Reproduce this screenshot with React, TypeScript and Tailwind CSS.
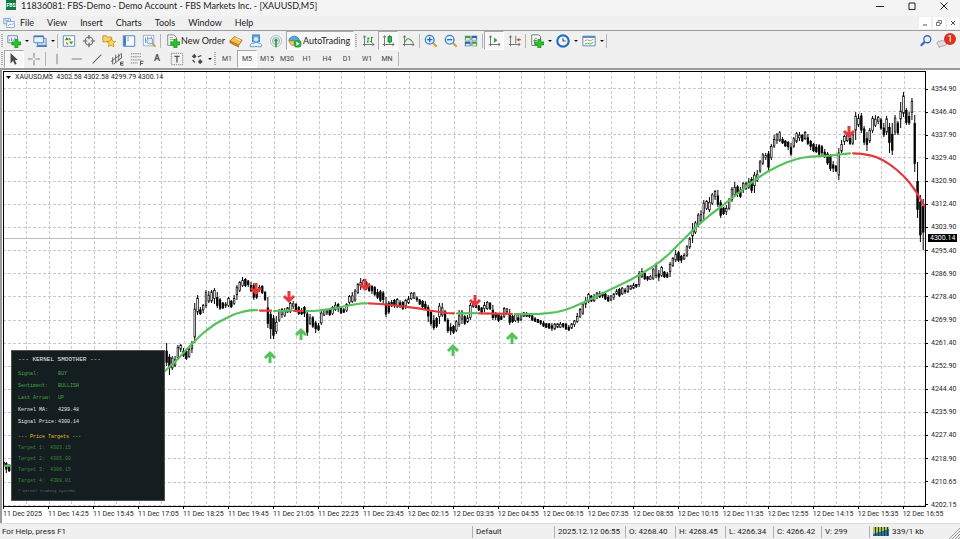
import type { ReactNode } from "react";

type Range = [high: number, low: number];

const FIRST_BAR_X = 3.5;
const BAR_STEP = 2.8125;

// Each block starts at a bar index and holds the high / low of every bar in it
const bars: { start: number; ranges: Range[] }[] = [
  { start: 0, ranges: [[460, 466], [462, 473], [464, 472], [466, 471]] },
  {
    start: 58,
    ranges: [
      [343, 366], [354, 375], [356, 370], [356, 367], [345, 360], [344, 352], [348, 357], [350, 360],
      [348, 358], [341, 353], [303, 343], [295, 315], [307, 315], [304, 313], [290, 308], [291, 303],
      [290, 303], [288, 304], [292, 308], [298, 310], [302, 309], [302, 308], [297, 307], [300, 308],
      [295, 305], [285, 300], [281, 292], [277, 287], [278, 287], [280, 287], [282, 292], [283, 300],
      [288, 299], [285, 292], [285, 294], [291, 301], [297, 328], [310, 339], [315, 339], [316, 334],
      [309, 322], [308, 318], [308, 317], [307, 313], [302, 313], [301, 309], [303, 312], [306, 315],
      [308, 315], [306, 317], [310, 336], [314, 325], [316, 328], [321, 333], [323, 331], [311, 325],
      [309, 316], [309, 315], [308, 316], [306, 315], [302, 311], [303, 312], [307, 314], [308, 313],
      [303, 312], [295, 306], [292, 303], [289, 302], [283, 294], [278, 290], [279, 288], [281, 290],
      [283, 292], [285, 294], [286, 296], [289, 299], [290, 302], [291, 304], [297, 317], [301, 314],
    ],
  },
  {
    start: 138,
    ranges: [
      [300, 307], [299, 308], [298, 308], [300, 308], [301, 310], [299, 309], [296, 304], [292, 300],
      [292, 299], [296, 302], [299, 305], [300, 308], [301, 310], [305, 322], [310, 326], [315, 330],
      [317, 328], [303, 324], [303, 317], [310, 322], [318, 333], [323, 335], [325, 334], [320, 332],
      [310, 327], [310, 324], [315, 325], [315, 323], [303, 320], [303, 308], [303, 308], [305, 311],
      [307, 313], [302, 312], [301, 310], [302, 310], [305, 320], [312, 320], [313, 322], [315, 320],
      [307, 318], [308, 314], [309, 325], [315, 323], [313, 322], [315, 323], [313, 321], [312, 317],
      [312, 317], [313, 318], [315, 321], [317, 322], [319, 323], [320, 325], [321, 327], [323, 328],
      [323, 329], [323, 331], [323, 330], [323, 328], [322, 328], [323, 328], [323, 330], [325, 331],
      [323, 329], [320, 327], [313, 323], [308, 318], [303, 315], [297, 308], [293, 303], [295, 302],
      [294, 302], [292, 299],
    ],
  },
  {
    start: 212,
    ranges: [
      [291, 298], [292, 298], [293, 300], [295, 302], [295, 301], [293, 300], [289, 295], [288, 297],
      [287, 295], [288, 294], [285, 293], [285, 290], [283, 289], [284, 288], [271, 287], [268, 278],
      [272, 280], [276, 281], [275, 280], [268, 280], [263, 278], [270, 281], [266, 277], [271, 278],
      [272, 278], [262, 277], [257, 267], [250, 262], [251, 262], [255, 263], [253, 260], [245, 257],
      [237, 249], [223, 243], [221, 234], [213, 227], [210, 223], [200, 220], [200, 210], [197, 212],
      [193, 205], [190, 200], [190, 207], [200, 218], [207, 215], [205, 215], [198, 210], [187, 202],
      [182, 197], [185, 197],
    ],
  },
  {
    start: 262,
    ranges: [
      [187, 198], [182, 193], [182, 190], [178, 189], [177, 193], [172, 193], [170, 182], [160, 173],
      [153, 165], [153, 160], [151, 170], [144, 160], [135, 148], [133, 144], [131, 142], [137, 144],
      [140, 147], [141, 150], [143, 156], [137, 148], [132, 143], [132, 141], [134, 142], [131, 140],
      [134, 145], [140, 150], [143, 152], [144, 153], [144, 156], [145, 157], [149, 158], [152, 165],
      [154, 171], [161, 172], [165, 172], [148, 180], [140, 153], [135, 145], [133, 142], [135, 145],
      [133, 145], [112, 140], [114, 127], [113, 133], [126, 145], [132, 151], [128, 143], [116, 133],
      [115, 127], [116, 124], [118, 130], [123, 137], [116, 135], [123, 153], [123, 155], [115, 135],
      [121, 135], [102, 128], [92, 117], [108, 125], [112, 125], [98, 120], [115, 172], [162, 218],
      [195, 242], [199, 250], [192, 238],
    ],
  },
];

const upColor = "#55c25c";
const downColor = "#e5383b";

const trendLines = [
  { color: upColor, points: "3,466 11,465.5" },
  { color: upColor, points: "165,371 173,363.5 180,356.7 187,349 195,341 201,335 207,330 216,323.5 227,317.7 235,314 243,311.7 250,310.3 257,310.2" },
  { color: downColor, points: "260,310.6 271,310.6" },
  { color: upColor, points: "274,311 283,310.8 292,310.4" },
  { color: downColor, points: "294,310.8 303,311" },
  { color: upColor, points: "306,311 313,311 320,310.3 330,309 340,307.3 349,305.3 357,304 362,303.4 367,303.3" },
  { color: downColor, points: "369,303.4 380,304 400,306 420,308.7 430,310.5 440,312 447,313 454,313.3" },
  { color: upColor, points: "457,313.4 477,313.2" },
  { color: downColor, points: "479,313.4 495,313.7 512,314" },
  { color: upColor, points: "515,314 530,314.2 540,313.8 548,313.2 557,312 565,310 573,307 587,301 600,294.5 620,285 631,279.5 642,273.3 651,267.8 660,261.7 669,254 678,245 686,237 693,230 701,222.7 710,215 722,206 733,197.3 745,187.5 757,178.5 767,172 777,166.7 787,162.3 797,159 804,157.5 811,156.6 830,155.6 840,154.3 850,153.3" },
  { color: downColor, points: "853,153.3 862,153.9 870,155.3 877,157.4 883,160.3 890,164.6 897,170 904,176.5 910,183.3 916,191.5 921,200 926,208.5" },
];

const sellArrows = [[256, 289], [289, 297], [365, 285], [475, 301], [849, 132]];
const buyArrows = [[270, 357], [301, 334], [453, 350], [512, 338]];

const prices = [
  "4354.90", "4346.40", "4337.90", "4329.40", "4320.90", "4312.40", "4303.90", "4295.40", "4286.90", "4278.40",
  "4269.90", "4261.40", "4252.90", "4244.40", "4235.90", "4227.40", "4218.90", "4210.65", "4202.15",
];

const times = [
  "11 Dec 2025", "11 Dec 14:25", "11 Dec 15:45", "11 Dec 17:05", "11 Dec 18:25", "11 Dec 19:45", "11 Dec 21:05",
  "11 Dec 22:25", "11 Dec 23:45", "12 Dec 02:15", "12 Dec 03:35", "12 Dec 04:55", "12 Dec 06:15", "12 Dec 07:35",
  "12 Dec 08:55", "12 Dec 10:15", "12 Dec 11:35", "12 Dec 12:55", "12 Dec 14:15", "12 Dec 15:35", "12 Dec 16:55",
];

const menus = ["File", "View", "Insert", "Charts", "Tools", "Window", "Help"];
const timeframes = ["M1", "M5", "M15", "M30", "H1", "H4", "D1", "W1", "MN"];

const signalRows = [
  { label: "Signal:", value: "BUY", color: "text-[#43a548]" },
  { label: "Sentiment:", value: "BULLISH", color: "text-[#43a548]" },
  { label: "Last Arrow:", value: "UP", color: "text-[#43a548]" },
  { label: "Kernel MA:", value: "4299.48", color: "text-[#e8e8e8]" },
  { label: "Signal Price:", value: "4300.14", color: "text-[#e8e8e8]" },
];

const targets = ["4303.15", "4305.00", "4306.15", "4308.01"];

const Icon = ({ children }: { children: ReactNode }) => (
  <svg viewBox="0 0 16 16" className="size-3.5 shrink-0" fill="none" aria-hidden="true">
    {children}
  </svg>
);

const Plus = () => (
  <path d="M9 6h3.500v3H16v3.500h-3.500V16H9v-3.500H5.500V9H9z" fill="#2bc52b" stroke="#0b7d12" strokeWidth=".7" />
);

const Axes = () => (
  <path d="M4 2v12M2 12h13M2.500 4 4 2l1.500 2M13 10.500 15 12l-2 1.500" stroke="#666" />
);

const icons = {
  app: (
    <>
      <path d="M1 2h9v7H1z" fill="#e3effc" stroke="#5d93d3" />
      <path d="M5 6h10v8H5z" fill="#fff" stroke="#5d93d3" />
      <path d="m7 12 2-3 2 2 3-3M2 4l3 1 3-1" stroke="#5d93d3" />
    </>
  ),
  newChart: (
    <>
      <path d="M1 2h11v8H1z" fill="#fff" stroke="#4f7fae" />
      <path d="M3 8V6m2 2V4m2 4V6m2 0V4" stroke="#4f7fae" />
      <Plus />
    </>
  ),
  profiles: (
    <>
      <path d="M5 5h10v8H5z" fill="#c9def5" stroke="#4d7db5" />
      <path d="M1 2h11v8H1z" fill="#eaf3fd" stroke="#4d7db5" />
      <path d="M1 3h11M4 14h12" stroke="#4d7db5" strokeWidth="1.500" />
    </>
  ),
  marketWatch: (
    <>
      <path d="M1.500 2h13v12h-13z" fill="#fff" stroke="#4d86c6" />
      <path d="m3 7 2.500-3.500L8 7zM8 8.500l2.500 3.500L13 8.500z" fill="#27a334" />
      <path d="M7.500 4.500 10 7M4.500 9.500 7 12" stroke="#d9762b" strokeWidth="1.800" />
    </>
  ),
  dataWindow: (
    <>
      <circle cx="8" cy="8" r="4.500" stroke="#666" strokeWidth="1.200" />
      <path d="M8 1v5M8 10v5M1 8h5M10 8h5" stroke="#666" strokeWidth="1.400" />
    </>
  ),
  navigator: (
    <>
      <path d="M1 2h4l1 1.500h5V9H1z" fill="#f7d367" stroke="#c59528" />
      <path d="m10.500 5 1.500 3.200 3.500.4-2.600 2.300.8 3.600-3.200-1.800-3.200 1.800.8-3.600L5.500 8.600l3.500-.4z" fill="#ffd84a" stroke="#b98616" strokeWidth=".8" />
    </>
  ),
  terminal: (
    <>
      <path d="M1.500 2h13v12h-13z" fill="#f3f9ff" stroke="#3c79c4" />
      <path d="M2 2.500h2.500v11H2z" fill="#3c79c4" />
      <path d="M6 4.500h2M6 7h2" stroke="#b36a32" />
    </>
  ),
  tester: (
    <>
      <path d="M1.500 1.500h12v12h-12z" fill="#fff" stroke="#8aa9c9" />
      <path d="M4 4v6M6.500 3v5M11 3v5" stroke="#5f8ec0" />
      <circle cx="9" cy="8" r="3.500" fill="#d9ecff" stroke="#6c93bd" />
      <path d="m11.500 10.500 4 4" stroke="#c69b3e" strokeWidth="2" />
    </>
  ),
  newOrder: (
    <>
      <path d="M2 1h7l3 3v9H2z" fill="#fff" stroke="#6a7f6a" />
      <path d="M4 4h4M4 6.500h6M4 9h3" stroke="#8b9b8b" />
      <Plus />
    </>
  ),
  metaEditor: (
    <>
      <path d="m1 8 5-5 9 4-4 6z" fill="#f2bd4b" stroke="#a86f12" />
      <path d="m1 8 10 5v2L1 10z" fill="#c88a20" stroke="#a86f12" strokeWidth=".7" />
      <path d="m7 4.500 6 2.700" stroke="#ffe6a3" strokeWidth="1.500" />
    </>
  ),
  account: (
    <>
      <path d="M4 1h8v8H4z" fill="#5ba5e0" stroke="#3f80b8" />
      <circle cx="8" cy="6" r="2.500" fill="#d8ecfa" />
      <path d="M1.500 14.500c-1-3 2-4.500 4-3.500 1-2 5-2 6 0 2-1 4 1.500 2.500 3.500z" fill="#eaf4fc" stroke="#5d8fc0" />
    </>
  ),
  signals: (
    <>
      <circle cx="8" cy="8" r="6.500" stroke="#a7bfc9" />
      <circle cx="8" cy="8" r="4" stroke="#7ba1a1" />
      <circle cx="8" cy="7.500" r="2" fill="#2fa344" />
      <path d="M8 9v6" stroke="#2fa344" strokeWidth="2" />
    </>
  ),
  autoTrading: (
    <>
      <path d="M1 8a6 5.500 0 0 1 12 0z" fill="#5ba6dc" stroke="#2c74ab" strokeWidth=".8" />
      <path d="M1 8h13l-3 5H4z" fill="#f3cc4c" stroke="#b58b1a" strokeWidth=".8" />
      <circle cx="11" cy="11" r="4.500" fill="#28a745" />
      <path d="m9.500 8.500 4 2.500-4 2.500z" fill="#fff" />
    </>
  ),
  barChart: (
    <>
      <Axes />
      <path d="M8 4v6M6.500 9H8M8 5h1.500M12 3v7M10.500 8.500H12M12 4h1.500" stroke="#23993a" strokeWidth="1.200" />
    </>
  ),
  candles: (
    <>
      <Axes />
      <path d="M10 1v10" stroke="#0c7a22" />
      <path d="M8 3h4v6H8z" fill="#2fc244" stroke="#0c7a22" />
    </>
  ),
  lineChart: (
    <>
      <Axes />
      <path d="M4 10c3-6 5-6 10 0" stroke="#39a44a" strokeWidth="1.200" />
    </>
  ),
  tile: (
    <>
      <path d="M1 2h6.500v5.500H1zM8.500 8.500H15V14H8.500z" fill="#4c9b3d" />
      <path d="M8.500 2H15v5.500H8.500zM1 8.500h6.500V14H1z" fill="#2f62ad" />
      <path d="M2 4.500h4.500V7H2zM9.500 4.500H14V7H9.500zM2 11h4.500v2.500H2zM9.500 11H14v2.500H9.500z" fill="#d6e6f4" />
    </>
  ),
  autoScroll: (
    <>
      <Axes />
      <path d="m8 4 4 3-4 3z" fill="#2ca53c" />
    </>
  ),
  chartShift: (
    <>
      <Axes />
      <path d="M10 2v9" stroke="#666" />
      <path d="m11 6.500 3-2v4z" fill="#c53a2c" />
      <path d="M13 6.500h3" stroke="#c53a2c" />
    </>
  ),
  indicators: (
    <>
      <path d="M2 1h8l2 2v10H2z" fill="#fff" stroke="#56705a" />
      <path d="M5 11c0-6 1-7 3-6M4 7.500h4" stroke="#3f7a48" />
      <Plus />
    </>
  ),
  periods: (
    <>
      <circle cx="8" cy="8" r="6.500" fill="#f4faff" stroke="#2a6cbc" strokeWidth="2.500" />
      <path d="M8 4.500V8h3" stroke="#2a4d7d" strokeWidth="1.200" />
    </>
  ),
  templates: (
    <>
      <path d="M1 2.500h14v11H1z" fill="#fff" stroke="#4f7fb0" />
      <path d="M1 3.500h14" stroke="#4f86c4" strokeWidth="2" />
      <path d="m3 8 3-1.500 3 1.500 4-2" stroke="#c0832d" />
      <path d="m3 11.500 3-1 3 1 4-2" stroke="#3d9c4a" />
    </>
  ),
  cursor: <path d="m4 1 8.500 8H9l2 4.500-2 1L7 10l-3 3z" fill="#4a4a4a" />,
  crosshair: <path d="M8 1v5.500M8 9.500V15M1 8h5.500M9.500 8H15" stroke="#888" strokeWidth="1.300" />,
  vLine: <path d="M8 2v12" stroke="#888" strokeWidth="1.200" />,
  hLine: <path d="M2 8h12" stroke="#888" strokeWidth="1.200" />,
  trendLine: <path d="M3 13 13 3" stroke="#666" strokeWidth="1.300" />,
  channel: (
    <>
      <path d="M1 11 12 3M4 14l10-8M3 6v8M6.500 3v9M10 2v8M13 1v6" stroke="#555" />
      <path d="M15.500 11.500H12v3.500h3.500M12 13.200h3" stroke="#444" />
    </>
  ),
  fibo: (
    <>
      <path d="M1 2h12M1 5.500h12M1 9h12M1 12.500h8" stroke="#666" strokeDasharray="1.500 1" />
      <path d="M12 15.500v-5h3.500M12 13h3" stroke="#444" />
    </>
  ),
  textBox: (
    <>
      <path d="M1.500 1.500h13v13h-13z" stroke="#777" strokeDasharray="1.500 1" />
      <path d="M5 5h6M8 5v7" stroke="#555" strokeWidth="1.500" />
    </>
  ),
  arrows: (
    <>
      <path d="m2 5 3-3 2.500 3L5 7.500zM9 11l2.500-3 3 3-3 3z" fill="#4a4a4a" />
      <path d="m3 9 2.500 3M9 5.500l4-1.500" stroke="#4a4a4a" strokeWidth="1.500" />
    </>
  ),
  search: (
    <>
      <circle cx="9.500" cy="6" r="4" fill="#eaf2ff" stroke="#3c66c4" strokeWidth="1.500" />
      <path d="M6.500 9 2 13.500" stroke="#3c66c4" strokeWidth="2.500" />
    </>
  ),
};

const ZoomIcon = ({ plus = false }) => (
  <Icon>
    <path d="m10 10 4.500 4.500" stroke="#d1a336" strokeWidth="2.500" />
    <circle cx="6.500" cy="6.500" r="5" fill="#e3f1ff" stroke="#3a80cd" strokeWidth="1.500" />
    <path d={plus ? "M3.500 6.500h6M6.500 3.500v6" : "M3.500 6.500h6"} stroke="#2368b6" strokeWidth="1.500" />
  </Icon>
);

const Caret = () => (
  <svg viewBox="0 0 4 2" className="ml-1 h-[2px] w-1 shrink-0" aria-hidden="true">
    <path d="M0 0h4L2 2z" fill="#111" />
  </svg>
);

const Separator = () => <span className="mx-px h-3.5 w-px shrink-0 bg-[#b5b5b5]" />;

const Grip = () => (
  <span className="mx-px h-3.5 w-0.5 shrink-0 bg-[repeating-linear-gradient(#a8a8a8_0_1px,transparent_1px_2px)]" />
);

interface ToolProps {
  label: string;
  children: ReactNode;
  pressed?: boolean;
  menu?: boolean;
}

const Tool = ({ label, children, pressed, menu }: ToolProps) => (
  <button
    type="button"
    aria-label={label}
    className={`flex h-full shrink-0 items-center justify-center border ${menu ? "w-[26px] pl-px" : "w-5"} ${
      pressed ? "border-[#a9a9a9] border-r-white border-b-white bg-[#f8f8f8]" : "border-transparent"
    }`}
  >
    {children}
    {menu && <Caret />}
  </button>
);

const TitleBar = () => (
  <header className="flex h-4 shrink-0 items-start bg-[#f3f3f3] pl-1.5">
    <span className="mr-[5px] flex h-2.5 w-2.5 items-center justify-center bg-[#0c7a43] text-[5px] leading-none font-bold text-white">
      FBS
    </span>
    <h1 className="flex-1 font-[Lato,sans-serif] text-[9px] leading-3 whitespace-nowrap">
      11836081: FBS-Demo - Demo Account - FBS Markets Inc. - [XAUUSD,M5]
    </h1>
    <div className="flex h-[11px]">
      <button type="button" aria-label="Minimize" className="flex w-8 items-center justify-center">
        <svg viewBox="0 0 8 8" className="size-2" stroke="#222"><path d="M0 4.500h8" /></svg>
      </button>
      <button type="button" aria-label="Maximize" className="flex w-8 items-center justify-center">
        <svg viewBox="0 0 8 8" className="size-2" stroke="#222" fill="none"><path d="M1 1h6v6.500H1z" /></svg>
      </button>
      <button type="button" aria-label="Close" className="flex w-8 items-center justify-center">
        <svg viewBox="0 0 8 8" className="size-2" stroke="#222"><path d="m.500.500 7 7m0-7-7 7" /></svg>
      </button>
    </div>
  </header>
);

const MenuBar = () => (
  <nav className="flex h-[15px] shrink-0 items-center border-b border-[#9c9c9c] bg-[#f0f0f0] pl-[3px]">
    <svg viewBox="0 0 16 16" className="mr-[5px] size-3" fill="none" aria-hidden="true">{icons.app}</svg>
    <ul className="flex flex-1 gap-[13px] font-[Lato,sans-serif] text-[9px] leading-3">
      {menus.map((menu) => (
        <li key={menu}>
          <button type="button">{menu}</button>
        </li>
      ))}
    </ul>
    <div className="flex gap-0.5 pr-px">
      <button type="button" aria-label="Minimize chart" className="flex size-3 items-center justify-center bg-white">
        <svg viewBox="0 0 6 6" className="size-1.5" stroke="#555"><path d="M1 5h4" /></svg>
      </button>
      <button type="button" aria-label="Restore chart" className="flex size-3 items-center justify-center bg-white">
        <svg viewBox="0 0 6 6" className="size-1.5" stroke="#555" fill="none"><path d="M2 2V.500h3.500v3H4M.500 2.500H4v3H.500z" strokeWidth=".8" /></svg>
      </button>
      <button type="button" aria-label="Close chart" className="flex size-3 items-center justify-center bg-white">
        <svg viewBox="0 0 6 6" className="size-1.5" stroke="#555"><path d="m1 1 4 4m0-4L1 5" /></svg>
      </button>
    </div>
  </nav>
);

const MainToolbar = () => (
  <div className="flex h-[19px] shrink-0 items-center">
    <div className="flex h-full flex-1 items-center">
      <Grip />
      <Tool label="New chart" menu><Icon>{icons.newChart}</Icon></Tool>
      <Tool label="Profiles" menu><Icon>{icons.profiles}</Icon></Tool>
      <Separator />
      <Tool label="Market watch"><Icon>{icons.marketWatch}</Icon></Tool>
      <Tool label="Data window"><Icon>{icons.dataWindow}</Icon></Tool>
      <Tool label="Navigator"><Icon>{icons.navigator}</Icon></Tool>
      <Tool label="Terminal"><Icon>{icons.terminal}</Icon></Tool>
      <Tool label="Strategy tester"><Icon>{icons.tester}</Icon></Tool>
      <Separator />
      <button type="button" className="flex h-full w-[64px] shrink-0 items-center gap-px pl-1 font-[Lato,sans-serif] text-[9px] whitespace-nowrap">
        <Icon>{icons.newOrder}</Icon>
        New Order
      </button>
      <Tool label="MetaEditor"><Icon>{icons.metaEditor}</Icon></Tool>
      <Tool label="Account"><Icon>{icons.account}</Icon></Tool>
      <Tool label="Signals"><Icon>{icons.signals}</Icon></Tool>
      <button type="button" className="flex h-full w-[68px] shrink-0 items-center gap-px border border-[#a9a9a9] border-r-white border-b-white bg-[#f8f8f8] pl-px font-[Lato,sans-serif] text-[9px] whitespace-nowrap">
        <Icon>{icons.autoTrading}</Icon>
        AutoTrading
      </button>
      <Grip />
      <Tool label="Bar chart"><Icon>{icons.barChart}</Icon></Tool>
      <Tool label="Candlesticks" pressed><Icon>{icons.candles}</Icon></Tool>
      <Tool label="Line chart"><Icon>{icons.lineChart}</Icon></Tool>
      <Separator />
      <Tool label="Zoom in"><ZoomIcon plus /></Tool>
      <Tool label="Zoom out"><ZoomIcon /></Tool>
      <Tool label="Tile windows"><Icon>{icons.tile}</Icon></Tool>
      <Separator />
      <Tool label="Auto scroll" pressed><Icon>{icons.autoScroll}</Icon></Tool>
      <Tool label="Chart shift"><Icon>{icons.chartShift}</Icon></Tool>
      <Separator />
      <Tool label="Indicators" menu><Icon>{icons.indicators}</Icon></Tool>
      <Tool label="Periods" menu><Icon>{icons.periods}</Icon></Tool>
      <Tool label="Templates" menu><Icon>{icons.templates}</Icon></Tool>
      <Separator />
    </div>
    <Tool label="Search"><Icon>{icons.search}</Icon></Tool>
    <button type="button" aria-label="Notifications" className="relative mr-1 h-full w-5">
      <svg viewBox="0 0 12 10" className="mt-1 h-2.5 w-3" aria-hidden="true">
        <path d="M1 5c0-3 10-3 10 0 0 2-2 3-5 3L3 9.500V8C2 7.500 1 6.500 1 5z" fill="#ddd" stroke="#aaa" />
      </svg>
      <span className="absolute top-0.5 right-0 flex size-3 items-center justify-center rounded-full bg-[#dc3220] text-[9px] leading-none text-white">
        1
      </span>
    </button>
  </div>
);

const DrawingToolbar = () => (
  <div className="flex h-[18px] shrink-0 items-center">
    <Grip />
    <Tool label="Cursor" pressed><Icon>{icons.cursor}</Icon></Tool>
    <Tool label="Crosshair"><Icon>{icons.crosshair}</Icon></Tool>
    <Separator />
    <Tool label="Vertical line"><Icon>{icons.vLine}</Icon></Tool>
    <Tool label="Horizontal line"><Icon>{icons.hLine}</Icon></Tool>
    <Tool label="Trendline"><Icon>{icons.trendLine}</Icon></Tool>
    <Tool label="Equidistant channel"><Icon>{icons.channel}</Icon></Tool>
    <Tool label="Fibonacci retracement"><Icon>{icons.fibo}</Icon></Tool>
    <Tool label="Text"><span className="text-[9px] font-bold text-[#555]">A</span></Tool>
    <Tool label="Text label"><Icon>{icons.textBox}</Icon></Tool>
    <Tool label="Arrows" menu><Icon>{icons.arrows}</Icon></Tool>
    <Grip />
    {timeframes.map((frame) => (
      <Tool key={frame} label={frame} pressed={frame === "M5"}>
        <span className="text-[7px] text-[#444]">{frame}</span>
      </Tool>
    ))}
    <Separator />
  </div>
);

const Candles = () => (
  <g>
    {bars.flatMap(({ start, ranges }) =>
      ranges.map(([high, low], i) => {
        const x = FIRST_BAR_X + (start + i) * BAR_STEP;
        const prev = ranges[i - 1] ?? [high, low - 1];
        const rising = high + low < prev[0] + prev[1];
        const span = low - high;
        const top = high + span * (i % 3 === 0 ? 0.35 : 0.15);
        const bottom = low - span * (i % 4 === 1 ? 0.35 : 0.15);
        return (
          <g key={start + i}>
            <path d={`M${x} ${high}V${low}`} stroke="#000" />
            <rect
              x={x - 0.8}
              y={top}
              width={1.6}
              height={bottom - top}
              fill={rising ? "#fff" : "#000"}
              stroke="#000"
              strokeWidth={0.7}
            />
          </g>
        );
      }),
    )}
  </g>
);

const Plot = () => (
  <svg viewBox="4 72 921 434" preserveAspectRatio="none" className="absolute inset-0 size-full" aria-label="XAUUSD, M5">
    <g stroke="#cacaca" strokeDasharray="3 2">
      {Array.from({ length: 40 }, (_, i) => (
        <path key={i} d={`M${Math.round(26 + i * 22.5) + 0.5} 71V507`} />
      ))}
      {prices.map((price, i) => (
        <path key={price} d={`M3 ${Math.round(88 + i * 23.15) + 0.5}H926`} />
      ))}
    </g>
    <path d="M3 238.500H926" stroke="#bdbdbd" />
    <Candles />
    {trendLines.map(({ color, points }) => (
      <polyline key={points} points={points} fill="none" stroke={color} strokeWidth="2.200" strokeLinecap="round" strokeLinejoin="round" />
    ))}
    {sellArrows.map(([x, y]) => (
      <path key={x} d={`M${x} ${y - 6}v10M${x - 5} ${y - 1}l5 5 5-5`} fill="none" stroke={downColor} strokeWidth="3" />
    ))}
    {buyArrows.map(([x, y]) => (
      <path key={x} d={`M${x} ${y + 6}v-10M${x - 5} ${y + 1}l5-5 5 5`} fill="none" stroke={upColor} strokeWidth="3" />
    ))}
  </svg>
);

const SignalPanel = () => (
  <section className="absolute bottom-[5px] left-[7px] h-[151px] w-[154px] border border-[#5a4c58] bg-[#141d1f] px-1.5 pt-1 font-['Liberation_Mono',monospace] text-[5px] whitespace-pre">
    <h2 className="text-[6px] leading-[10px] text-[#e8e8e8]">--- KERNEL SMOOTHER ---</h2>
    <dl className="mt-1">
      {signalRows.map(({ label, value, color }) => (
        <div key={label} className={`flex h-3 items-center ${color}`}>
          <dt className="w-10">{label}</dt>
          <dd>{value}</dd>
        </div>
      ))}
    </dl>
    <h3 className="mt-0.5 leading-3 text-[#e0c02a]">--- Price Targets ---</h3>
    <dl>
      {targets.map((target, i) => (
        <div key={target} className="flex h-[11px] items-center text-[#39853e]">
          <dt className="w-8">Target {i + 1}:</dt>
          <dd>{target}</dd>
        </div>
      ))}
    </dl>
    <p className="text-[4px] leading-2 text-[#56706f]">© Kernel Trading Systems</p>
  </section>
);

const Chart = () => (
  <main className="flex min-h-0 flex-1 border-t-2 border-l-2 border-[#9a9a9a] bg-white pt-px pl-px text-[7px]">
    <div className="flex min-w-0 flex-1 flex-col">
      <div className="relative min-h-0 flex-1 border border-black">
        <Plot />
        <p className="absolute top-px left-0.5 flex items-center gap-1 leading-2 whitespace-pre">
          <svg viewBox="0 0 5 3" className="h-[3px] w-[5px]" aria-hidden="true"><path d="M0 0h5L2.500 3z" /></svg>
          XAUUSD,M5  4302.58 4302.58 4299.79 4300.14
        </p>
        <SignalPanel />
      </div>
      <ol className="flex h-4 shrink-0">
        {times.map((time) => (
          <li key={time} className="w-[4.875%] shrink-0 whitespace-nowrap">
            <span className="block h-0.5 w-px bg-black" />
            <span className="block leading-[11px]">{time}</span>
          </li>
        ))}
      </ol>
    </div>
    <div className="relative w-[34px] shrink-0 pt-3.5 pb-3.5">
      <ol className="flex h-full flex-col justify-between">
        {prices.map((price) => (
          <li key={price} className="flex h-2 items-center gap-[3px]">
            <span className="h-px w-0.5 bg-black" />
            {price}
          </li>
        ))}
      </ol>
      <output className="absolute top-[36%] left-0.5 bg-black px-0.5 leading-2 text-white">4300.14</output>
    </div>
  </main>
);

const StatusBar = () => (
  <footer className="flex h-4 shrink-0 items-center border-t border-[#dcdcdc] bg-[#f0f0f0] text-[8px] leading-3 whitespace-nowrap">
    <span className="flex-1 pl-0.5">For Help, press F1</span>
    <span className="w-[82px] border-l border-[#b0b0b0] pl-[3px]">Default</span>
    <span className="w-[71px] border-l border-[#b0b0b0] pl-[3px]">2025.12.12 06:55</span>
    <span className="w-[50px] border-l border-[#b0b0b0] pl-[3px]">O: 4268.40</span>
    <span className="w-[50px] border-l border-[#b0b0b0] pl-[3px]">H: 4268.45</span>
    <span className="w-[48px] border-l border-[#b0b0b0] pl-[3px]">L: 4266.34</span>
    <span className="w-[48px] border-l border-[#b0b0b0] pl-[3px]">C: 4266.42</span>
    <span className="w-[48px] border-l border-[#b0b0b0] pl-[3px]">V: 299</span>
    <span className="flex w-[80px] items-center gap-[3px] border-l border-[#b0b0b0] pl-[3px]">
      <svg viewBox="0 0 16 9" className="h-[9px] w-4" aria-hidden="true">
        <path d="M0 0h16v9H0z" fill="#b9c34a" />
        <path d="M0 7 16 2v7H0z" fill="#2b6ca3" />
        <path d="M2.500 0v9M5.500 0v9M8.500 0v9M11.500 0v9M14.500 0v9" stroke="#23402f" />
      </svg>
      339/1 kb
    </span>
    <svg viewBox="0 0 11 11" className="mt-auto size-[11px]" stroke="#9a9a9a" aria-hidden="true">
      <path d="M0 11 11 0M3 11l8-8M6 11l5-5M9 11l2-2" />
    </svg>
  </footer>
);

export default function App() {
  return (
    <div className="flex h-screen flex-col overflow-hidden bg-[#f0f0f0] font-[Roboto,sans-serif] text-[#1c1c1c]">
      <TitleBar />
      <MenuBar />
      <MainToolbar />
      <DrawingToolbar />
      <Chart />
      <StatusBar />
    </div>
  );
}
